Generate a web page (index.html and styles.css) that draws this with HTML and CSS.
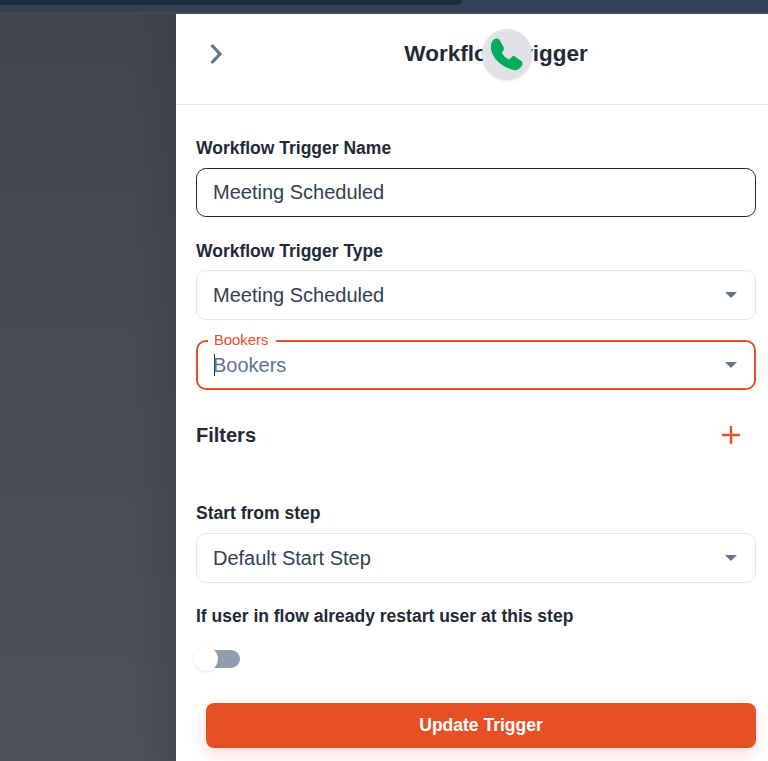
FILE: index.html
```html
<!DOCTYPE html>
<html lang="en">
<head>
    <meta charset="UTF-8">
    <title>Workflow Trigger</title>
    <link rel="stylesheet" href="styles.css">
</head>
<body>
    <div class="top-bar">
        <div class="top-tab"></div>
    </div>

    <div class="page">
        <div class="backdrop"></div>

        <aside class="panel">
            <header class="panel-header">
                <svg class="back-icon" width="16" height="22" viewBox="0 0 16 22">
                    <path d="M3.5 2 L12 11 L3.5 20" fill="none" stroke="#64748b" stroke-width="3.2"/>
                </svg>
                <h1>Workflow Trigger</h1>
            </header>

            <form class="trigger-form">
                <label class="field-label">Workflow Trigger Name</label>
                <div class="box box-active">Meeting Scheduled</div>

                <label class="field-label label-type">Workflow Trigger Type</label>
                <div class="box">
                    <span>Meeting Scheduled</span>
                    <span class="caret"></span>
                </div>

                <div class="box box-focus">
                    <span class="float-label">Bookers</span>
                    <span class="placeholder">Bookers</span>
                    <span class="caret"></span>
                </div>

                <div class="filters-row">
                    <h2>Filters</h2>
                    <svg width="18" height="18" viewBox="0 0 18 18">
                        <path d="M9 0 V18 M0 9 H18" stroke="#e65027" stroke-width="2.4"/>
                    </svg>
                </div>

                <label class="field-label">Start from step</label>
                <div class="box">
                    <span>Default Start Step</span>
                    <span class="caret"></span>
                </div>

                <label class="field-label label-restart">If user in flow already restart user at this step</label>
                <div class="toggle">
                    <span class="toggle-knob"></span>
                </div>

                <button type="button" class="submit-btn">Update Trigger</button>
            </form>
        </aside>

        <!-- floating call widget, sits over the title -->
        <div class="call-bubble">
            <svg width="32" height="33" viewBox="62 54 102 102">
                <path d="M72 60 Q80 55 86 59 L100 84 Q101 92 92 100 Q103 117 120 125 Q127 118 134 112 L158 129 Q162 136 156 142 Q148 152 138 152 Q100 144 76 114 Q62 92 65 76 Q66 66 72 60 Z" fill="#00ad5c" stroke="#00ad5c" stroke-width="6" stroke-linejoin="round"/>
            </svg>
        </div>
    </div>
</body>
</html>
```

FILE: styles.css
```css
html, body {
    margin: 0;
    padding: 0;
    height: 761px;
    overflow: hidden;
    font-family: 'Liberation Sans', Arial, sans-serif;
    color: #1f2a37;
    background: #3f444c;
}

.top-bar {
    height: 12px;
    background: #334155;
    border-bottom: 2px solid #464a50;
}

.top-tab {
    width: 462px;
    height: 5px;
    background: #1e293b;
    border-bottom-right-radius: 8px;
}

.page {
    display: flex;
    height: 747px;
}

.backdrop {
    width: 176px;
    flex-shrink: 0;
    background: linear-gradient(to right, rgba(30, 35, 42, 0) 75%, rgba(30, 35, 42, 0.15) 100%),
                linear-gradient(to bottom, #42464c 0%, #4d515a 100%);
}

.panel {
    flex: 1;
    background: #ffffff;
}

.panel-header {
    display: flex;
    align-items: center;
    justify-content: center;
    position: relative;
    height: 80px;
    padding: 0 0 10px 48px;
    border-bottom: 1px solid #e5e7eb;
}

.panel-header h1 {
    margin: 0;
    font-size: 22.5px;
    font-weight: 700;
    color: #1f2a37;
}

.back-icon {
    position: absolute;
    left: 32px;
    top: 29px;
}

.trigger-form {
    display: flex;
    flex-direction: column;
    padding: 32px 12px 0 20px;
}

.field-label {
    font-size: 17.5px;
    line-height: 22px;
    font-weight: 700;
    margin-bottom: 9px;
}

.label-type {
    margin-top: 23px;
    margin-bottom: 8px;
}

.label-restart {
    margin-top: 22px;
    margin-bottom: 0;
}

.box {
    display: flex;
    align-items: center;
    justify-content: space-between;
    box-sizing: border-box;
    height: 50px;
    margin: 0;
    padding: 0 16px;
    border: 1px solid #e2e8f0;
    border-radius: 10px;
    font-size: 20px;
    color: #344050;
}

.box-active {
    height: 49px;
    border-color: #1f2a37;
}

.box-focus {
    position: relative;
    margin-top: 20px;
    border: 2px solid #e65027;
    padding: 0 15px;
}

.float-label {
    position: absolute;
    top: -10px;
    left: 10px;
    padding: 0 8px 0 6px;
    background: #ffffff;
    font-size: 14.8px;
    line-height: 16px;
    color: #e65027;
}

.placeholder {
    color: #64748b;
    line-height: 22px;
    background: linear-gradient(#1f2a37, #1f2a37) 1px 0 / 1px 100% no-repeat;
}

.caret {
    width: 0;
    height: 0;
    margin-right: 2px;
    border-left: 6px solid transparent;
    border-right: 6px solid transparent;
    border-top: 6px solid #64748b;
}

.filters-row {
    display: flex;
    align-items: center;
    justify-content: space-between;
    height: 24px;
    margin: 33px 0 55px;
    padding-right: 16px;
}

.filters-row h2 {
    margin: 0;
    font-size: 20px;
    font-weight: 700;
}

.toggle {
    position: relative;
    width: 36px;
    height: 18px;
    margin: 23px 0 0 8px;
    border-radius: 9px;
    background: #8f9dac;
}

.toggle-knob {
    position: absolute;
    left: -10px;
    top: -3px;
    width: 24px;
    height: 24px;
    border-radius: 50%;
    background: #ffffff;
    box-shadow: 0 1px 3px rgba(0, 0, 0, 0.12);
}

.submit-btn {
    height: 45px;
    margin: 35px 0 0 10px;
    border: none;
    border-radius: 8px;
    background: #e65027;
    color: #ffffff;
    font-family: inherit;
    font-size: 17.5px;
    font-weight: 700;
    box-shadow: 0 6px 16px rgba(230, 80, 39, 0.2);
}

.call-bubble {
    position: absolute;
    left: 482px;
    top: 29px;
    display: flex;
    align-items: center;
    justify-content: center;
    width: 50px;
    height: 51px;
    border-radius: 50%;
    background: #e0e2e6;
    box-shadow: 0 1px 3px rgba(0, 0, 0, 0.1);
}
```
